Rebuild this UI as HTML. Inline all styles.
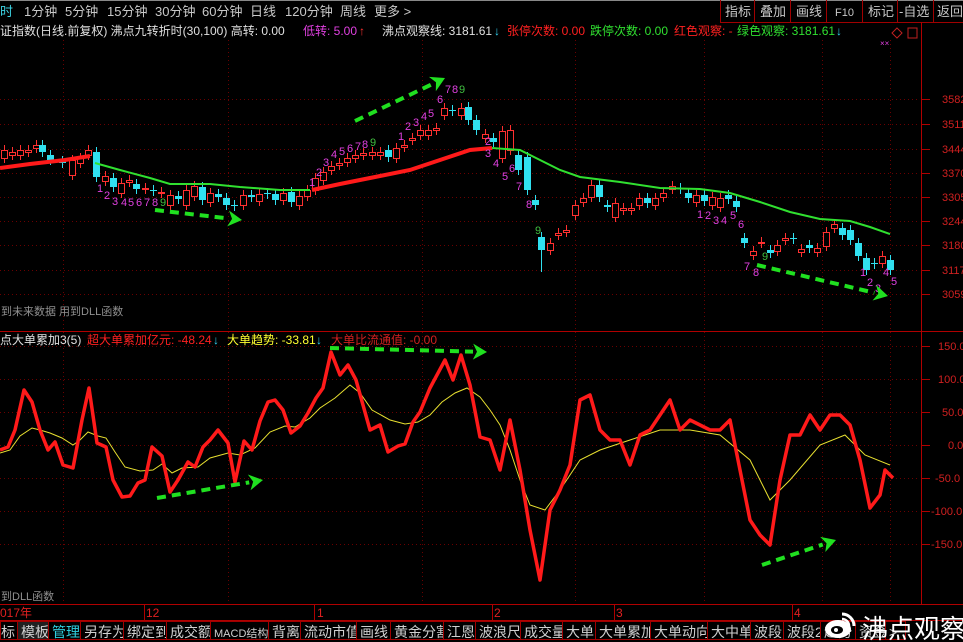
<!DOCTYPE html>
<html><head><meta charset="utf-8">
<style>
html,body{margin:0;padding:0;background:#000;width:963px;height:642px;overflow:hidden}
svg{display:block}
text{font-family:"Liberation Sans","Noto Sans CJK SC",sans-serif}
</style></head><body>
<svg id="s" width="963" height="642" viewBox="0 0 963 642" xmlns="http://www.w3.org/2000/svg">
<rect width="963" height="642" fill="#000"/>
<g font-size="13" fill="#c8c8c8">
<text x="0" y="16" fill="#3cd0e0">时</text>
<text x="24" y="16">1分钟</text>
<text x="65" y="16">5分钟</text>
<text x="107" y="16">15分钟</text>
<text x="155" y="16">30分钟</text>
<text x="202" y="16">60分钟</text>
<text x="250" y="16">日线</text>
<text x="285" y="16">120分钟</text>
<text x="340" y="16">周线</text>
<text x="374" y="16">更多 &gt;</text>
</g>
<line x1="0" y1="0.5" x2="963" y2="0.5" stroke="#888"/>
<g stroke="#a00000" fill="none">
<line x1="720.5" y1="0" x2="720.5" y2="22"/><line x1="754.5" y1="0" x2="754.5" y2="22"/>
<line x1="790.5" y1="0" x2="790.5" y2="22"/><line x1="826.5" y1="0" x2="826.5" y2="22"/>
<line x1="862.5" y1="0" x2="862.5" y2="22"/><line x1="897.5" y1="0" x2="897.5" y2="22"/>
<line x1="933.5" y1="0" x2="933.5" y2="22"/>
<line x1="720" y1="22.5" x2="963" y2="22.5"/>
</g>
<g font-size="13" fill="#c8c8c8">
<text x="725" y="16">指标</text><text x="760" y="16">叠加</text><text x="796" y="16">画线</text>
<text x="835" y="16" font-size="11">F10</text><text x="868" y="16">标记</text><text x="899" y="16">-自选</text><text x="937" y="16">返回</text>
</g>
<g font-size="12">
<text x="0" y="35" fill="#e0e0e0">证指数(日线.前复权) 沸点九转折时(30,100)  高转: 0.00</text>
<text x="303" y="35" fill="#e040e0">低转: 5.00</text><text x="359" y="35" fill="#ff3030">↑</text>
<text x="382" y="35" fill="#e0e0e0">沸点观察线: 3181.61</text><text x="494" y="35" fill="#30d0f0">↓</text>
<text x="507" y="35" fill="#ff2020">张停次数: 0.00</text>
<text x="590" y="35" fill="#30e030">跌停次数: 0.00</text>
<text x="674" y="35" fill="#ff2020">红色观察: -</text>
<text x="737" y="35" fill="#30e030">绿色观察: 3181.61</text><text x="836" y="35" fill="#30d0f0">↓</text>
</g>
<path d="M897 28 L902 33 L897 38 L892 33Z" fill="none" stroke="#c02020"/>
<rect x="908" y="28" width="9" height="10" fill="none" stroke="#c02020"/>
<text x="880" y="46" font-size="8" fill="#e040e0">××</text>
<g stroke="#b00000" fill="none">
<line x1="921.5" y1="22" x2="921.5" y2="604"/>
<line x1="0" y1="331.5" x2="963" y2="331.5"/>
<line x1="0" y1="604.5" x2="963" y2="604.5"/>
<line x1="0" y1="620.5" x2="963" y2="620.5"/>
</g>
<g id="grid" stroke="#6a0000" stroke-dasharray="1,3"></g>
<g font-size="11" fill="#d02020">
<text x="942" y="103">3582</text><text x="942" y="128">3511</text><text x="942" y="153">3444</text>
<text x="942" y="177">3370</text><text x="942" y="201">3305</text><text x="942" y="225">3244</text>
<text x="942" y="249">3180</text><text x="942" y="274">3117</text><text x="942" y="298">3059</text>
<text x="938" y="350">150.0</text><text x="938" y="383">100.0</text><text x="942" y="416">50.0</text>
<text x="948" y="449">0.0</text><text x="935" y="482">-50.0</text><text x="931" y="515">-100.0</text><text x="931" y="548">-150.0</text>
</g>
<g id="ticks" stroke="#b00000"></g>
<g id="cand"></g>
<polyline points="0,168 30,164 65,160 90,156" fill="none" stroke="#ff1a1a" stroke-width="4"/>
<polyline points="95,163 120,170 150,178 170,184 210,184 240,187 280,190 310,190" fill="none" stroke="#30e030" stroke-width="2"/>
<polyline points="312,190 340,184 380,176 410,170 440,160 470,150 492,148" fill="none" stroke="#ff1a1a" stroke-width="4"/>
<polyline points="492,148 520,150 540,160 560,170 580,177 620,182 660,188 700,189 730,193 760,202 790,212 820,219 850,221 870,227 890,234" fill="none" stroke="#30e030" stroke-width="2"/>
<g id="nums" font-size="11" fill="#e040e0"></g>
<text x="1" y="315" font-size="11" fill="#909090">到未来数据 用到DLL函数</text>
<g font-size="12">
<text x="0" y="344" fill="#e0e0e0">点大单累加3(5)</text>
<text x="87" y="344" fill="#ff2020">超大单累加亿元: -48.24</text><text x="213" y="344" fill="#30d0f0">↓</text>
<text x="227" y="344" fill="#ffff30">大单趋势: -33.81</text><text x="316" y="344" fill="#30d0f0">↓</text>
<text x="331" y="344" fill="#d02020">大单比流通值: -0.00</text>
</g>
<polyline id="yl" fill="none" stroke="#e8e030" stroke-width="1"/>
<polyline id="rl" fill="none" stroke="#ff1a1a" stroke-width="3.5" stroke-linejoin="round"/>
<g id="arr"></g>
<text x="1" y="600" font-size="11" fill="#909090">到DLL函数</text>
<g font-size="12" fill="#e02020">
<text x="0" y="617">017年</text><text x="146" y="617">12</text><text x="317" y="617">1</text>
<text x="494" y="617">2</text><text x="616" y="617">3</text><text x="794" y="617">4</text>
</g>
<g stroke="#b00000"><line x1="144.5" y1="604" x2="144.5" y2="620"/><line x1="314.5" y1="604" x2="314.5" y2="620"/><line x1="492.5" y1="604" x2="492.5" y2="620"/><line x1="614.5" y1="604" x2="614.5" y2="620"/><line x1="792.5" y1="604" x2="792.5" y2="620"/></g>
<g id="tabs" font-size="14"></g>
<g transform="translate(826,626)">
<ellipse cx="12" cy="3" rx="13" ry="9" fill="#fff"/>
<ellipse cx="11" cy="4" rx="6" ry="4" fill="#000"/>
<circle cx="10" cy="4" r="2" fill="#fff"/>
<path d="M16 -12 A12 12 0 0 1 28 0" stroke="#fff" stroke-width="3" fill="none"/>
<path d="M16 -7 A7 7 0 0 1 23 0" stroke="#fff" stroke-width="2.5" fill="none"/>
</g>
<text x="862" y="638" font-size="26" fill="#fff">沸点观察</text>
</svg>
<script>
var NS="http://www.w3.org/2000/svg";
function el(p,t,a){var e=document.createElementNS(NS,t);for(var k in a)e.setAttribute(k,a[k]);document.getElementById(p).appendChild(e);return e;}
[99,124,149,173,197,221,245,270,294,346,379,412,445,478,511,544].forEach(function(y){el("grid","line",{x1:0,y1:y+.5,x2:920,y2:y+.5});});
[63,228,422,575,704,822,890].forEach(function(x){el("grid","line",{x1:x+.5,y1:40,x2:x+.5,y2:604});});
[99,124,149,173,197,221,245,270,294,346,379,412,445,478,511,544].forEach(function(y){el("ticks","line",{x1:921,y1:y+.5,x2:930,y2:y+.5});});
var C=[[4,150,158,'r'],[12,152,155,'r'],[20,150,155,'r'],[28,150,152,'r'],[36,145,148,'r'],[42,145,152,'c'],[50,155,160,'c'],[62,161,163,'c'],[72,160,175,'r'],[80,158,163,'r'],[88,150,155,'r'],[96,152,177,'c'],[105,176,181,'r'],[113,178,187,'c'],[121,183,193,'r'],[129,180,182,'r'],[136,184,189,'c'],[145,188,189,'r'],[153,190,191,'c'],[161,192,193,'r'],[170,195,205,'r'],[178,196,199,'c'],[186,190,205,'r'],[194,186,196,'r'],[202,187,200,'c'],[210,193,202,'r'],[218,194,197,'c'],[226,198,205,'c'],[234,205,206,'c'],[243,195,205,'r'],[251,195,197,'c'],[259,194,201,'r'],[267,193,194,'c'],[275,194,200,'c'],[283,193,200,'r'],[291,192,202,'c'],[299,196,205,'r'],[307,190,196,'r'],[315,178,190,'r'],[323,172,180,'r'],[331,166,170,'r'],[339,163,165,'r'],[347,158,162,'r'],[355,155,158,'r'],[363,153,155,'r'],[372,152,155,'r'],[380,152,155,'r'],[388,150,157,'c'],[396,148,158,'r'],[404,145,147,'r'],[412,138,140,'r'],[420,130,135,'r'],[428,130,135,'r'],[436,128,130,'r'],[444,108,115,'r'],[452,110,111,'c'],[461,108,115,'r'],[468,107,120,'c'],[476,120,130,'c'],[485,134,138,'r'],[493,138,142,'c'],[502,131,158,'r'],[510,130,150,'r'],[518,155,170,'c'],[527,157,190,'c'],[535,200,205,'c'],[541,237,250,'c'],[550,243,250,'r'],[558,233,235,'r'],[566,230,232,'r'],[575,205,215,'r'],[583,198,202,'r'],[591,185,197,'r'],[599,185,197,'c'],[607,205,207,'c'],[615,203,217,'r'],[623,208,210,'r'],[631,208,210,'r'],[639,198,205,'r'],[647,198,203,'c'],[655,198,205,'r'],[663,193,197,'r'],[672,186,189,'r'],[680,188,189,'c'],[688,193,198,'c'],[696,195,202,'r'],[704,195,201,'c'],[712,197,205,'r'],[720,198,207,'r'],[728,195,199,'c'],[736,201,207,'c'],[744,238,243,'c'],[753,251,255,'r'],[761,242,243,'r'],[770,250,253,'c'],[777,245,251,'r'],[785,238,240,'r'],[793,238,239,'c'],[801,249,252,'r'],[809,245,248,'c'],[817,248,252,'r'],[826,232,246,'r'],[834,224,228,'r'],[842,228,235,'c'],[850,230,240,'c'],[858,243,256,'c'],[866,258,270,'c'],[874,263,264,'c'],[882,256,263,'r'],[890,260,270,'c']];
C.forEach(function(c){var col=c[3]=='r'?'#ff3030':'#30e0f0';
 el("cand","line",{x1:c[0]+.5,y1:c[1]-5,x2:c[0]+.5,y2:c[2]+5,stroke:col});
 var h=Math.max(1,c[2]-c[1]);
 if(c[3]=='r')el("cand","rect",{x:c[0]-2.5,y:c[1]+.5,width:6,height:h,fill:'#000',stroke:col});
 else el("cand","rect",{x:c[0]-3,y:c[1],width:7,height:h,fill:col});});
el("cand","line",{x1:541.5,y1:250,x2:541.5,y2:272,stroke:'#30e0f0'});
var N=[[97,192,'1'],[104,199,'2'],[112,205,'3'],[121,206,'4'],[128,206,'5'],[136,206,'6'],[144,206,'7'],[152,206,'8'],[160,206,'9',1],
[309,186,'1'],[316,176,'2'],[323,166,'3'],[331,158,'4'],[339,155,'5'],[347,152,'6'],[355,150,'7'],[362,148,'8'],[370,146,'9',1],
[398,140,'1'],[405,130,'2'],[413,126,'3'],[421,120,'4'],[428,117,'5'],[437,103,'6'],[445,93,'7'],[452,93,'8'],[459,93,'9',1],
[485,145,'2'],[485,157,'3'],[493,167,'4'],[502,180,'5'],[509,172,'6'],[516,190,'7'],[526,208,'8'],[535,234,'9',1],
[697,218,'1'],[705,219,'2'],[713,224,'3'],[721,224,'4'],[730,219,'5'],[738,228,'6'],[744,270,'7'],[753,276,'8'],[762,260,'9',1],
[860,276,'1'],[867,286,'2'],[875,292,'3'],[883,276,'4'],[891,285,'5']];
N.forEach(function(n){var t=el("nums","text",{x:n[0],y:n[1]});if(n[3])t.setAttribute("fill","#40c040");t.textContent=n[2];});
var R="0,450 8,447 15,430 24,390 32,402 40,430 48,450 55,442 63,465 73,468 82,420 89,388 97,443 106,447 113,480 122,497 130,496 138,483 145,480 152,447 162,456 170,492 178,480 188,462 195,467 203,447 210,440 218,430 228,443 235,482 244,441 252,450 260,421 268,402 275,400 283,410 291,433 300,426 308,413 316,398 323,388 331,352 340,375 348,365 356,380 370,430 380,425 388,452 398,446 405,444 413,422 420,412 430,388 445,360 453,380 461,355 470,385 480,437 490,440 500,470 510,420 520,470 530,530 540,580 550,510 560,490 570,465 580,400 590,395 600,430 610,440 620,440 630,465 640,435 650,430 660,415 670,400 680,430 690,420 700,425 710,430 720,430 730,420 740,470 750,520 760,535 770,545 780,480 790,435 800,435 810,415 820,430 830,415 840,415 850,425 860,460 870,508 880,495 885,470 893,478";
var Y="0,453 10,450 20,436 32,428 40,430 50,433 62,438 73,445 80,440 88,432 98,436 106,438 115,452 125,467 140,471 153,470 162,464 172,473 182,468 198,467 210,458 228,453 240,455 255,448 270,432 285,426 295,427 310,418 320,408 335,398 350,385 360,393 372,410 390,420 405,424 418,422 430,415 442,402 455,393 467,388 480,397 490,410 500,425 510,450 520,480 530,505 545,510 560,490 580,460 600,450 630,440 660,430 690,430 720,435 750,460 770,500 790,480 820,445 845,435 865,455 890,465";
document.getElementById("rl").setAttribute("points",R);
document.getElementById("yl").setAttribute("points",Y);
function arrow(x1,y1,x2,y2){var dx=x2-x1,dy=y2-y1,L=Math.sqrt(dx*dx+dy*dy),ux=dx/L,uy=dy/L;
 var bx=x2-ux*14,by=y2-uy*14;
 el("arr","line",{x1:x1,y1:y1,x2:bx,y2:by,stroke:'#20e020','stroke-width':4,'stroke-dasharray':'9,6'});
 el("arr","polygon",{points:x2+","+y2+" "+(bx-uy*8)+","+(by+ux*8)+" "+(bx+ux*4)+","+(by+uy*4)+" "+(bx+uy*8)+","+(by-ux*8),fill:'#20e020'});}
arrow(155,210,242,220);arrow(355,121,445,78);arrow(330,348,487,352);arrow(157,498,263,480);arrow(762,565,836,540);arrow(757,265,888,296);
var T=[["标",0,17],["模板",17,48],["管理",48,80],["另存为",80,123],["绑定到",123,166],["成交额",166,210],["MACD结构",210,268],["背离",268,300],["流动市值",300,356],["画线",356,390],["黄金分割",390,443],["江恩",443,475],["波浪尺",475,520],["成交量",520,562],["大单",562,595],["大单累加",595,650],["大单动向",650,707],["大中单",707,750],["波段",750,783],["波段2",783,820],["趋势",820,855],["资金",855,885],[">",885,905]];
T.forEach(function(t,i){var x=t[1],w=t[2]-t[1];
 el("tabs","rect",{x:x+.5,y:621.5,width:w,height:18,fill:i==1?'#202020':'#000',stroke:'#a00000'});
 var tx=el("tabs","text",{x:x+(i==0?1:4),y:637,fill:i==2?'#30d0e0':'#d0d0d0'});if(t[0]=="MACD结构")tx.setAttribute("font-size","11");tx.textContent=t[0];});
</script>
</body></html>
